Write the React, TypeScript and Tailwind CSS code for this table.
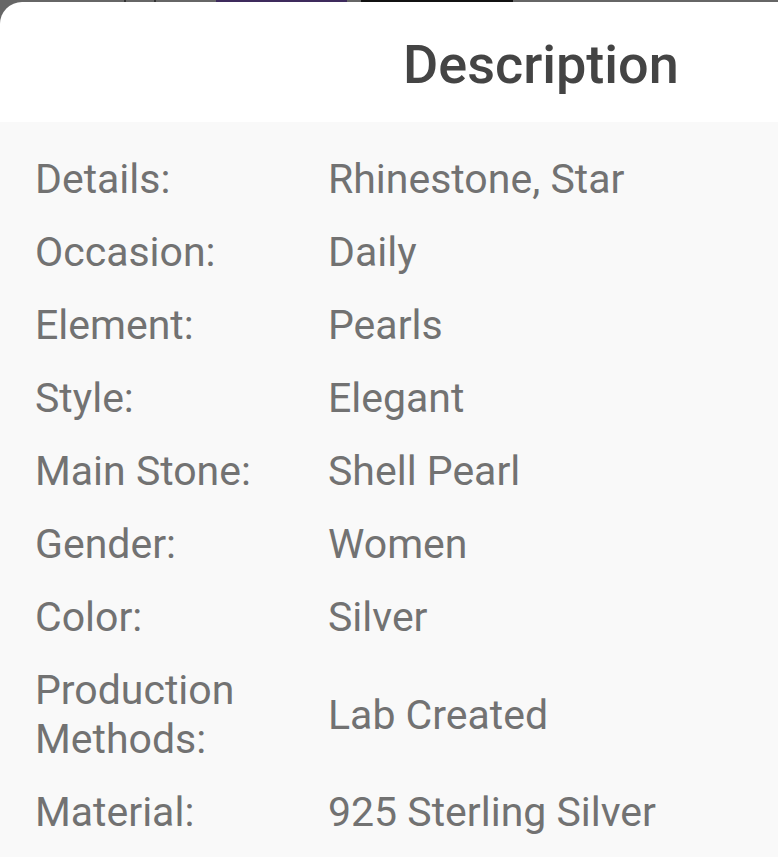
const specs: [string, string][] = [
  ["Details:", "Rhinestone, Star"],
  ["Occasion:", "Daily"],
  ["Element:", "Pearls"],
  ["Style:", "Elegant"],
  ["Main Stone:", "Shell Pearl"],
  ["Gender:", "Women"],
  ["Color:", "Silver"],
  ["Production Methods:", "Lab Created"],
  ["Material:", "925 Sterling Silver"],
];

export default function App() {
  return (
    <div className="h-[857px] w-[778px] overflow-hidden bg-[#666666] font-['Roboto',sans-serif]">
      {/* bits of the page behind the sheet */}
      <div className="flex h-[2px]">
        <div className="w-[124px]" />
        <div className="w-[2px] bg-[#333]" />
        <div className="w-[28px]" />
        <div className="w-[2px] bg-[#333]" />
        <div className="w-[60px]" />
        <div className="w-[131px] bg-[#3d2a5c]" />
        <div className="w-[14px]" />
        <div className="w-[152px] bg-[#111]" />
      </div>
      <div className="h-[855px] rounded-tl-[22px] bg-white">
        <div className="flex h-[120px] items-center pt-[6px] pl-[403px]">
          <h2 className="text-[54px] leading-none font-medium text-[#444444]">Description</h2>
        </div>
        <div className="h-[735px] bg-[#f9f9f9] px-[35px] pt-[21px]">
          {specs.map(([label, value]) => (
            <div key={label} className="grid grid-cols-[293px_1fr] items-center py-[12px] text-[41px] leading-[49px] text-[#727272]">
              <span className="pr-[40px]">{label}</span>
              <span>{value}</span>
            </div>
          ))}
        </div>
      </div>
    </div>
  );
}
